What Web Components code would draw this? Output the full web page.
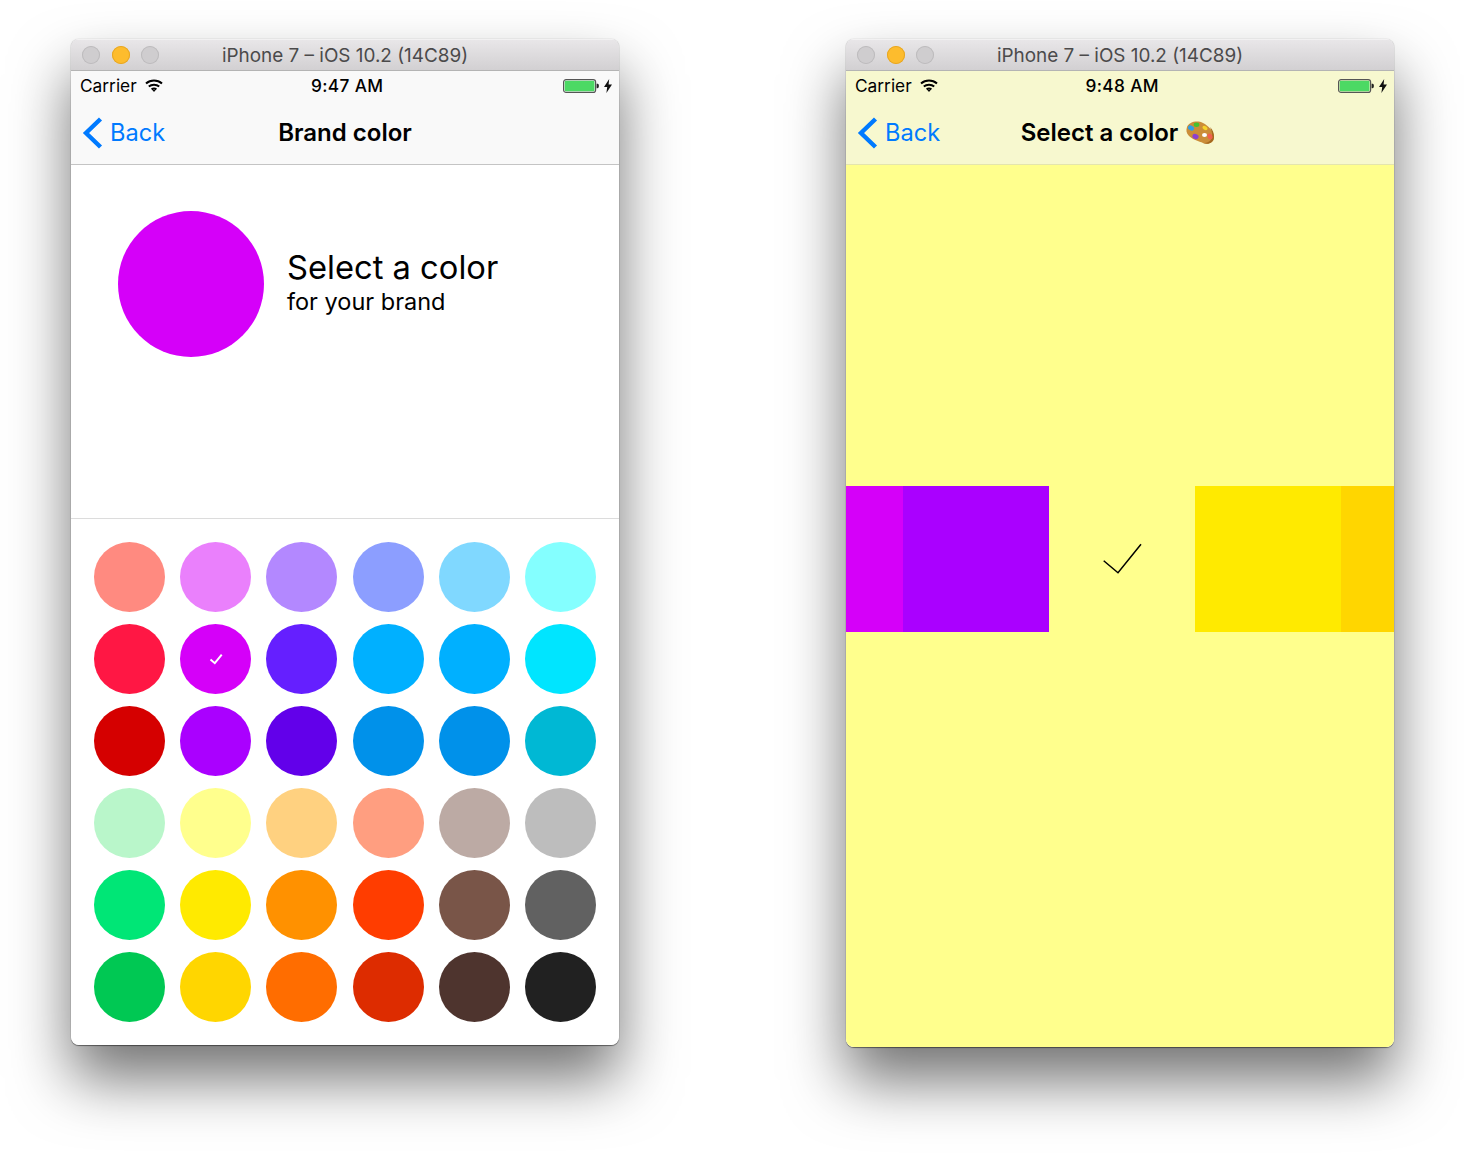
<!doctype html>
<html>
<head>
<meta charset="utf-8">
<title>Brand color</title>
<style>
  html, body { margin: 0; background: #fff; }
  body { height: 1155px; overflow: hidden; font-family: Inter, "Liberation Sans", sans-serif; }
  sim-desktop { --sf: Inter, "Liberation Sans", sans-serif; }
</style>
</head>
<body>
<sim-desktop>
  <sim-window title="iPhone 7 – iOS 10.2 (14C89)" style="--bar: #f9f9f9; --bar-line: #c4c4c4; --screen-h: 974px">
    <status-bar time="9:47 AM"></status-bar>
    <nav-bar>Brand color</nav-bar>
    <brand-hero color="#D500F9"></brand-hero>
    <color-grid selected="#D500F9"></color-grid>
  </sim-window>
  <sim-window title="iPhone 7 – iOS 10.2 (14C89)" style="--bar: #f7f8cf; --bar-line: #e4e5ae; --screen-h: 976px">
    <status-bar time="9:48 AM"></status-bar>
    <nav-bar>Select a color <palette-icon></palette-icon></nav-bar>
    <color-carousel color="#FFFF8D" colors="#D500F9 #AA00FF #FFFF8D #FFEA00 #FFD600"></color-carousel>
  </sim-window>
</sim-desktop>

<script>
  const COLORS = [
    '#FF8A80', '#EA80FC', '#B388FF', '#8C9EFF', '#80D8FF', '#84FFFF',
    '#FF1744', '#D500F9', '#651FFF', '#00B0FF', '#00B0FF', '#00E5FF',
    '#D50000', '#AA00FF', '#6200EA', '#0091EA', '#0091EA', '#00B8D4',
    '#B9F6CA', '#FFFF8D', '#FFD180', '#FF9E80', '#BCAAA4', '#BDBDBD',
    '#00E676', '#FFEA00', '#FF9100', '#FF3D00', '#795548', '#616161',
    '#00C853', '#FFD600', '#FF6D00', '#DD2C00', '#4E342E', '#212121',
  ];

  // same tick at both sizes, only scaled
  const tick = (size, color, width) => `
    <svg width="${size}" height="${size}" viewBox="0 0 146 146" fill="none">
      <path d="M54.7 74.7 69 86.7 92 58.3" stroke="${color}" stroke-width="${width}"/>
    </svg>`;

  class SimDesktop extends HTMLElement {
    constructor() {
      super();

      this.root = this.attachShadow({ mode: 'open' });
    }

    connectedCallback() {
      this.root.innerHTML = `
        <style>
          :host {
            display: flex;
            align-items: flex-start;
            gap: 227px;
            padding: 39px 0 0 71px;
          }
        </style>
        <slot></slot>
      `;
    }
  }

  class SimWindow extends HTMLElement {
    constructor() {
      super();

      this.root = this.attachShadow({ mode: 'open' });
    }

    connectedCallback() {
      this.root.innerHTML = `
        <style>
          :host {
            display: block;
            flex: 0 0 auto;
            width: 548px;
            border-radius: 8px;
            box-shadow: 0 34px 60px rgba(0, 0, 0, .55), 0 1px 1px rgba(0, 0, 0, .45), 0 0 1px rgba(0, 0, 0, .4);
          }

          .frame {
            border-radius: 8px;
            overflow: hidden;
          }

          .titlebar {
            position: relative;
            box-sizing: border-box;
            height: 32px;
            padding-top: 3px;
            background: linear-gradient(#e9e7e9, #d2d0d2);
            border-bottom: 1px solid #b4b4b4;
            box-shadow: inset 0 1px 0 #f2f1f2;
            display: flex;
            align-items: center;
            justify-content: center;
            color: #4b4a4b;
            font: 400 18.9px/1 var(--sf);
          }

          .lights {
            position: absolute;
            left: 11px;
            top: 7px;
            display: flex;
            gap: 11.5px;
          }

          .lights i {
            width: 18px;
            height: 18px;
            border-radius: 50%;
            background: #cfcdcf;
            box-shadow: inset 0 0 0 1px #bdbbbd;
          }

          .lights i:nth-child(2) {
            background: #fdbc2d;
            box-shadow: inset 0 0 0 1px #e6a624;
          }

          .screen {
            display: flex;
            flex-direction: column;
            height: var(--screen-h);
            background: #fff;
          }
        </style>
        <div class="frame">
          <div class="titlebar">
            <div class="lights"><i></i><i></i><i></i></div>
            <span>${this.getAttribute('title')}</span>
          </div>
          <div class="screen"><slot></slot></div>
        </div>
      `;
    }
  }

  class StatusBar extends HTMLElement {
    constructor() {
      super();

      this.root = this.attachShadow({ mode: 'open' });
    }

    connectedCallback() {
      this.root.innerHTML = `
        <style>
          :host {
            display: grid;
            grid-template-columns: 1fr auto 1fr;
            align-items: center;
            height: 30px;
            padding: 0 7.5px 0 9px;
            background: var(--bar);
            color: #000;
            font: 400 17.3px/1 var(--sf);
          }

          .left, .right {
            display: flex;
            align-items: center;
          }

          .left { gap: 8px; }

          .right {
            justify-content: flex-end;
            gap: 5px;
          }

          .time {
            font-weight: 500;
            letter-spacing: .35px;
            padding-left: 3px;
          }
        </style>
        <div class="left">
          <span>Carrier</span>
          <svg width="18" height="13" viewBox="0 0 18 13" fill="none" stroke="#000" stroke-width="2">
            <path d="M1 4.6C5.5.6 12.5.6 17 4.6"/>
            <path d="M3.8 7.6C6.6 5.1 11.4 5.1 14.2 7.6"/>
            <path d="M6.6 10.4C7.9 9.4 10.1 9.4 11.4 10.4"/>
            <path d="M9 13 7.4 11.1C8.3 10.5 9.7 10.5 10.6 11.1Z" fill="#000" stroke="none"/>
          </svg>
        </div>
        <div class="time">${this.getAttribute('time')}</div>
        <div class="right">
          <svg width="36" height="14" viewBox="0 0 36 14">
            <rect x=".6" y=".6" width="32" height="12.8" rx="2.5" fill="none" stroke="#555" stroke-width="1.2"/>
            <rect x="1.7" y="1.7" width="29.8" height="10.6" rx="1.2" fill="#4cd964"/>
            <path d="M33.6 4.8h.8c.8 0 1.4.6 1.4 1.4v1.6c0 .8-.6 1.4-1.4 1.4h-.8Z" fill="#222"/>
          </svg>
          <svg width="8" height="14" viewBox="0 0 8 14">
            <path d="M5.2 0 0 8h3.2L2.4 14 8 5.6H4.6Z" fill="#111"/>
          </svg>
        </div>
      `;
    }
  }

  class NavBar extends HTMLElement {
    constructor() {
      super();

      this.root = this.attachShadow({ mode: 'open' });
    }

    connectedCallback() {
      this.root.innerHTML = `
        <style>
          :host {
            display: grid;
            grid-template-columns: 1fr auto 1fr;
            align-items: center;
            height: 63px;
            padding-left: 11px;
            background: var(--bar);
            border-bottom: 1px solid var(--bar-line);
            flex: 0 0 auto;
          }

          .back {
            display: flex;
            align-items: center;
            gap: 7px;
            color: #007aff;
            font: 400 23.6px/1 var(--sf);
          }

          .title {
            display: flex;
            align-items: center;
            gap: 7px;
            color: #000;
            font: 600 24px/1 var(--sf);
            padding-right: 11px;
          }
        </style>
        <div class="back">
          <svg width="21" height="32" viewBox="0 0 21 32" fill="none" stroke="#007aff" stroke-width="4.4">
            <path d="M18.5 2 4 16l14.5 14"/>
          </svg>
          <span>Back</span>
        </div>
        <div class="title"><slot></slot></div>
        <div></div>
      `;
    }
  }

  class PaletteIcon extends HTMLElement {
    constructor() {
      super();

      this.root = this.attachShadow({ mode: 'open' });
    }

    connectedCallback() {
      this.root.innerHTML = `
        <style>
          :host {
            display: inline-flex;
            margin-right: 4px;
          }
        </style>
        <svg width="30" height="26" viewBox="-1 -1 30 26" role="img" aria-label="palette">
          <path d="M1 6C3 1 11-1 17 2c5 2.500 11 8 11 14 0 6-6 8-11 6-4-2-10-3-14-7C0 12 0 9 1 6Z" fill="#cb8d38"/>
          <path d="M24 6c3 3 4 6 4 10 0 6-6 8-11 6 5 0 8-2 9-6 .6-3-.4-7-2-10Z" fill="#a5691f"/>
          <ellipse cx="5" cy="7" rx="3.200" ry="2.400" fill="#2f9fe8" transform="rotate(30 5 7)"/>
          <ellipse cx="10.500" cy="3.800" rx="2.800" ry="2.200" fill="#43c22e"/>
          <ellipse cx="19" cy="7" rx="2.800" ry="1.900" fill="#f7d429" transform="rotate(35 19 7)"/>
          <ellipse cx="9.500" cy="15.500" rx="3.200" ry="2.500" fill="#8d3fd0" transform="rotate(25 9.500 15.500)"/>
          <ellipse cx="18.500" cy="14" rx="2.500" ry="2.100" fill="#fff"/>
          <ellipse cx="24" cy="15.500" rx="2.400" ry="3" fill="#f0604d" transform="rotate(-25 24 15.500)"/>
        </svg>
      `;
    }
  }

  class BrandHero extends HTMLElement {
    constructor() {
      super();

      this.root = this.attachShadow({ mode: 'open' });
    }

    connectedCallback() {
      this.root.innerHTML = `
        <style>
          :host {
            display: flex;
            align-items: flex-start;
            gap: 23px;
            height: 354px;
            box-sizing: border-box;
            padding: 46px 0 0 47px;
            border-bottom: 1px solid #dcdcdc;
            flex: 0 0 auto;
          }

          .swatch {
            flex: 0 0 auto;
            width: 146px;
            height: 146px;
            border-radius: 50%;
            background: ${this.getAttribute('color')};
          }

          .copy {
            margin-top: 36px;
            color: #000;
          }

          .big { font: 400 32.7px/40px var(--sf); }
          .small { font: 400 23.5px/28px var(--sf); margin-top: 1px; }
        </style>
        <div class="swatch"></div>
        <div class="copy">
          <div class="big">Select a color</div>
          <div class="small">for your brand</div>
        </div>
      `;
    }
  }

  class ColorDot extends HTMLElement {
    constructor() {
      super();

      this.root = this.attachShadow({ mode: 'open' });
    }

    connectedCallback() {
      this.root.innerHTML = `
        <style>
          :host {
            display: flex;
            align-items: center;
            justify-content: center;
            justify-self: center;
            width: 71px;
            height: 70px;
            border-radius: 50%;
            background: ${this.getAttribute('color')};
          }
        </style>
        ${this.hasAttribute('checked') ? tick(44, '#fff', 6.5) : ''}
      `;
    }
  }

  class ColorGrid extends HTMLElement {
    constructor() {
      super();

      this.root = this.attachShadow({ mode: 'open' });
    }

    connectedCallback() {
      const selected = this.getAttribute('selected');

      this.root.innerHTML = `
        <style>
          :host {
            display: grid;
            grid-template-columns: repeat(6, 1fr);
            grid-auto-rows: 70px;
            row-gap: 12px;
            padding: 23px 15.5px 0;
          }
        </style>
        ${COLORS.map(color => `<color-dot color="${color}" ${color === selected ? 'checked' : ''}></color-dot>`).join('')}
      `;
    }
  }

  class ColorCarousel extends HTMLElement {
    constructor() {
      super();

      this.root = this.attachShadow({ mode: 'open' });
    }

    connectedCallback() {
      const page = this.getAttribute('color');
      const colors = this.getAttribute('colors').split(' ');

      this.root.innerHTML = `
        <style>
          :host {
            display: flex;
            align-items: center;
            flex: 1 1 auto;
            overflow: hidden;
            padding-bottom: 94px;
            box-sizing: border-box;
            background: ${page};
          }

          .track {
            display: flex;
            flex: 0 0 auto;
            margin-left: -89px;
          }

          .tile {
            display: flex;
            flex: 0 0 auto;
            width: 146px;
            height: 146px;
          }
        </style>
        <div class="track">
          ${colors.map(color => `<div class="tile" style="background: ${color}">${color === page ? tick(146, '#000', 1.5) : ''}</div>`).join('')}
        </div>
      `;
    }
  }

  customElements.define('sim-desktop', SimDesktop);
  customElements.define('sim-window', SimWindow);
  customElements.define('status-bar', StatusBar);
  customElements.define('nav-bar', NavBar);
  customElements.define('palette-icon', PaletteIcon);
  customElements.define('brand-hero', BrandHero);
  customElements.define('color-dot', ColorDot);
  customElements.define('color-grid', ColorGrid);
  customElements.define('color-carousel', ColorCarousel);
</script>
</body>
</html>
